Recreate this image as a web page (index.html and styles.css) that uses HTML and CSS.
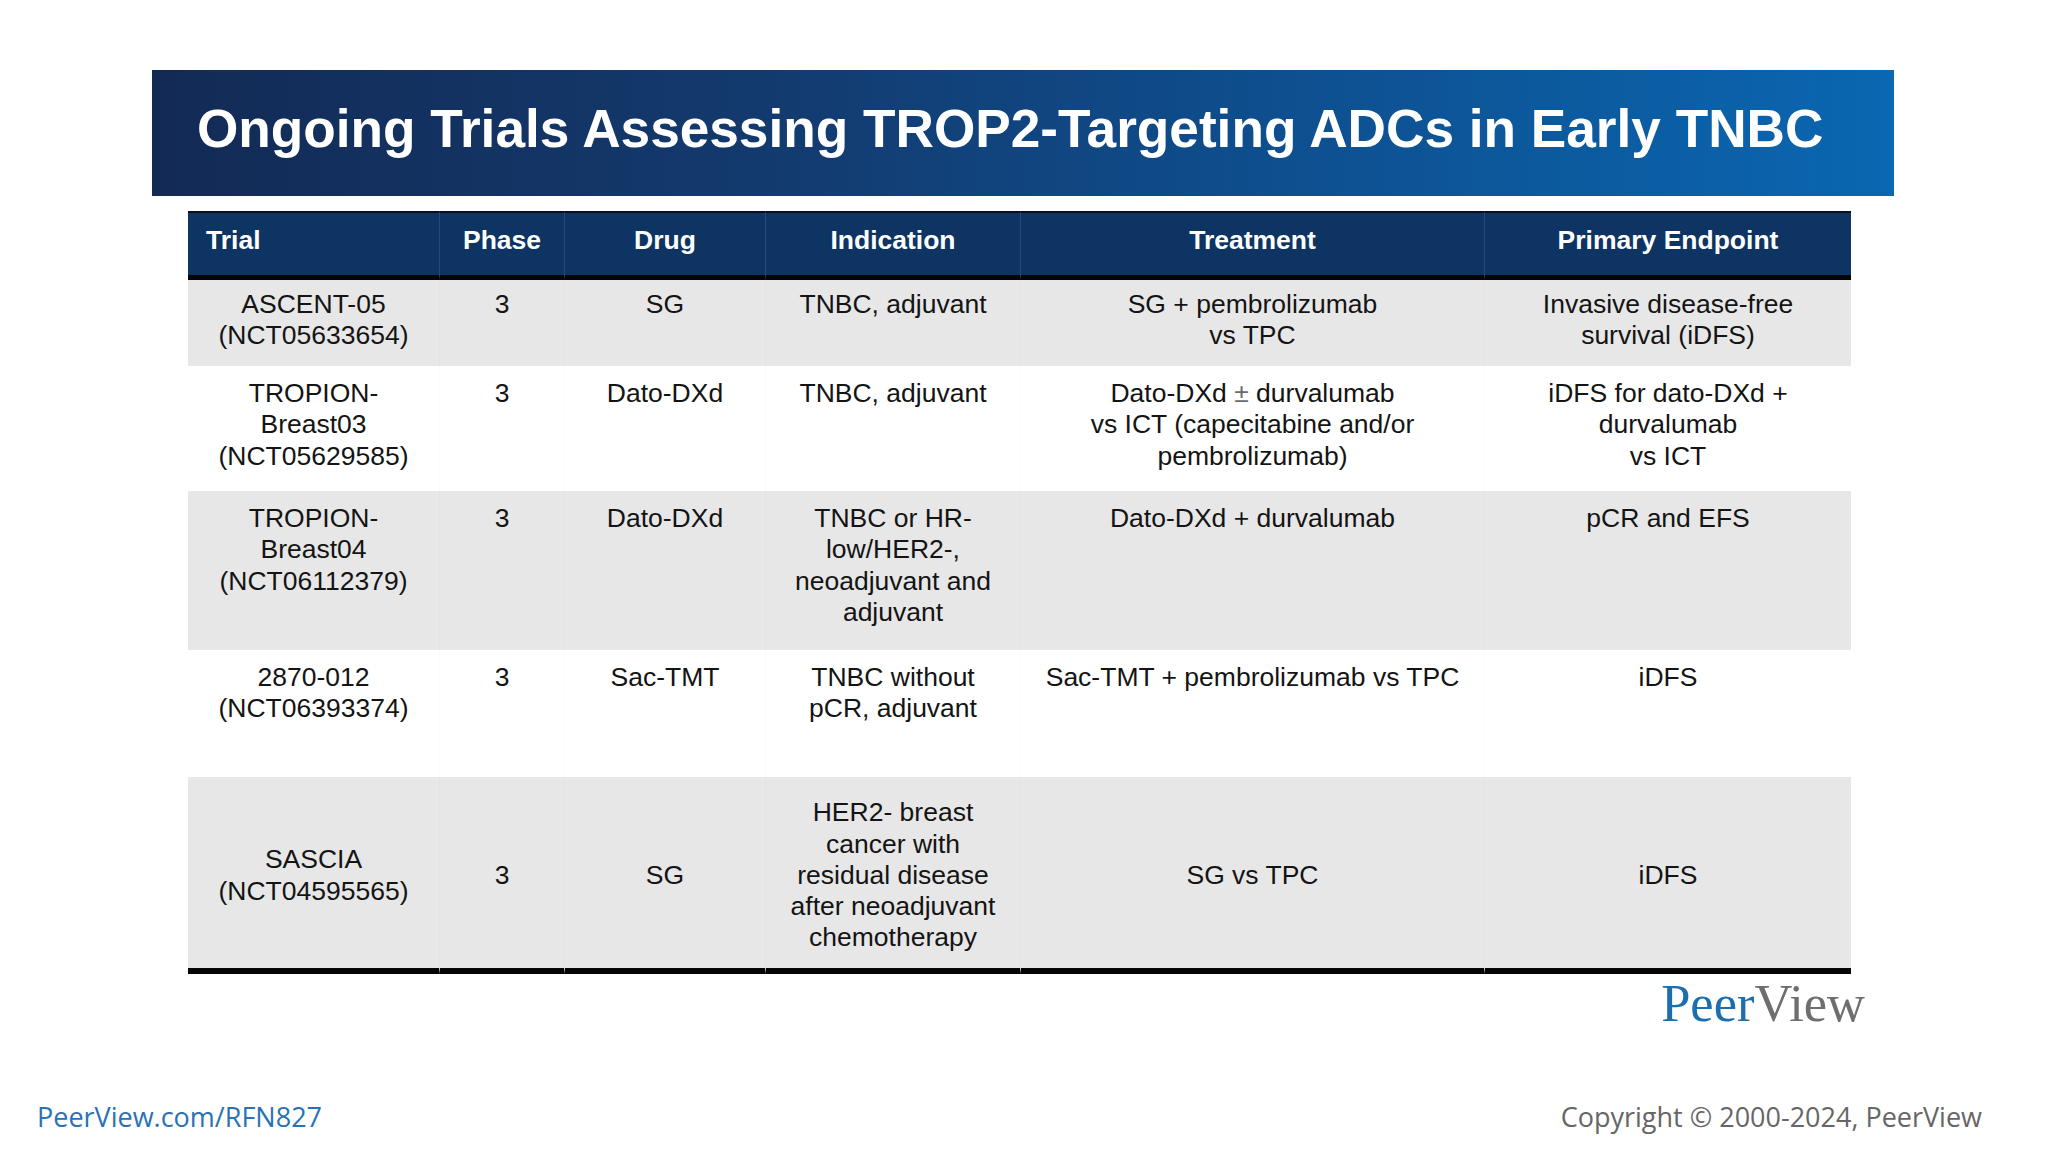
FILE: index.html
```html
<!DOCTYPE html>
<html lang="en">
<head>
<meta charset="utf-8">
<title>Ongoing Trials Assessing TROP2-Targeting ADCs in Early TNBC</title>
<link rel="stylesheet" href="styles.css">
</head>
<body>
<div class="slide">
  <div class="banner">
    <h1 class="title">Ongoing Trials Assessing TROP2-Targeting ADCs in Early TNBC</h1>
  </div>

  <div class="table-wrap">
    <table class="trials">
      <colgroup>
        <col class="c-trial">
        <col class="c-phase">
        <col class="c-drug">
        <col class="c-ind">
        <col class="c-treat">
        <col class="c-end">
      </colgroup>
      <thead>
        <tr class="head-row">
          <th class="th-left">Trial</th>
          <th>Phase</th>
          <th>Drug</th>
          <th>Indication</th>
          <th>Treatment</th>
          <th>Primary Endpoint</th>
        </tr>
      </thead>
      <tbody>
        <tr class="row r1 grey">
          <td>ASCENT-05<br>(NCT05633654)</td>
          <td>3</td>
          <td>SG</td>
          <td>TNBC, adjuvant</td>
          <td>SG + pembrolizumab<br>vs TPC</td>
          <td>Invasive disease-free<br>survival (iDFS)</td>
        </tr>
        <tr class="row r2">
          <td>TROPION-<br>Breast03<br>(NCT05629585)</td>
          <td>3</td>
          <td>Dato-DXd</td>
          <td>TNBC, adjuvant</td>
          <td>Dato-DXd <span class="pm">±</span> durvalumab<br>vs ICT (capecitabine and/or<br>pembrolizumab)</td>
          <td>iDFS for dato-DXd +<br>durvalumab<br>vs ICT</td>
        </tr>
        <tr class="row r3 grey">
          <td>TROPION-<br>Breast04<br>(NCT06112379)</td>
          <td>3</td>
          <td>Dato-DXd</td>
          <td>TNBC or HR-<br>low/HER2-,<br>neoadjuvant and<br>adjuvant</td>
          <td>Dato-DXd + durvalumab</td>
          <td>pCR and EFS</td>
        </tr>
        <tr class="row r4">
          <td>2870-012<br>(NCT06393374)</td>
          <td>3</td>
          <td>Sac-TMT</td>
          <td>TNBC without<br>pCR, adjuvant</td>
          <td>Sac-TMT + pembrolizumab vs TPC</td>
          <td>iDFS</td>
        </tr>
        <tr class="row r5 grey">
          <td>SASCIA<br>(NCT04595565)</td>
          <td>3</td>
          <td>SG</td>
          <td>HER2- breast<br>cancer with<br>residual disease<br>after neoadjuvant<br>chemotherapy</td>
          <td>SG vs TPC</td>
          <td>iDFS</td>
        </tr>
      </tbody>
    </table>
  </div>

  <div class="logo-row">
    <div class="logo"><span class="logo-peer">Peer</span><span class="logo-view">View</span></div>
  </div>

  <div class="footer">
    <span class="footer-link">PeerView.com/RFN827</span>
    <span class="footer-copy">Copyright © 2000-2024, PeerView</span>
  </div>
</div>
</body>
</html>
```

FILE: styles.css
```css
html, body {
  margin: 0;
  padding: 0;
  background: #ffffff;
}

.slide {
  width: 2048px;
  height: 1152px;
  box-sizing: border-box;
  padding-top: 70px;
  display: flex;
  flex-direction: column;
  font-family: "Liberation Sans", Arial, sans-serif;
  overflow: hidden;
}

/* Title banner */
.banner {
  margin-left: 152px;
  width: 1742px;
  height: 126px;
  box-sizing: border-box;
  padding-left: 45px;
  padding-bottom: 8px;
  display: flex;
  align-items: center;
  background: linear-gradient(to right, #132a55 0%, #133a6e 35%, #0e4f8f 65%, #0a67b1 100%);
}

.title {
  margin: 0;
  color: #ffffff;
  font-family: "Liberation Sans", Arial, sans-serif;
  font-weight: bold;
  font-size: 53.2px;
  line-height: 60px;
  white-space: nowrap;
}

/* Table */
.table-wrap {
  margin-top: 15px;
  margin-left: 188px;
  width: 1663px;
}

.trials {
  width: 1663px;
  table-layout: fixed;
  border-collapse: separate;
  border-spacing: 0;
  font-size: 26.5px;
  line-height: 31.3px;
  color: #141414;
}

.c-trial { width: 251px; }
.c-phase { width: 125px; }
.c-drug { width: 201px; }
.c-ind { width: 255px; }
.c-treat { width: 464px; }
.c-end { width: 367px; }

.head-row {
  height: 69px;
}

.head-row th {
  background: #0d3462;
  color: #ffffff;
  font-weight: bold;
  text-align: center;
  vertical-align: top;
  padding: 12px 0 0 0;
  border-top: 2px solid #0a0f1a;
  border-bottom: 5px solid #050505;
  border-left: 1px solid #24497a;
  white-space: nowrap;
}

.head-row th.th-left {
  text-align: left;
  padding-left: 18px;
  border-left: none;
}

.row td {
  text-align: center;
  vertical-align: top;
  padding: 12px 0 0 0;
  white-space: nowrap;
}

.row td + td {
  border-left: 1px solid rgba(0, 0, 0, 0.015);
}

.grey td {
  background: #e7e7e7;
}

.r1 { height: 86px; }
.r1 td { padding-top: 9px; }
.r2 { height: 125px; }
.r3 { height: 159px; }
.r4 { height: 127px; }
.r5 { height: 197px; }
.r5 td {
  vertical-align: middle;
  padding-top: 6px;
  border-bottom: 6px solid #050505;
}

.pm {
  color: #6a6a6a;
}

/* Logo */
.logo-row {
  display: flex;
  justify-content: flex-end;
  margin-top: 3px;
  padding-right: 183px;
}

.logo {
  font-family: "Liberation Serif", "Times New Roman", serif;
  font-size: 52.5px;
  line-height: 52px;
  white-space: nowrap;
}

.logo-peer { color: #1b6fae; }
.logo-view { color: #6e6e6e; }

/* Footer */
.footer {
  margin-top: auto;
  display: flex;
  justify-content: space-between;
  align-items: baseline;
  padding: 0 66px 22px 37px;
  font-family: "Open Sans", "Liberation Sans", sans-serif;
  font-size: 27px;
  line-height: 27px;
}

.footer-link { color: #2a72b5; }
.footer-copy { color: #666666; }
```
